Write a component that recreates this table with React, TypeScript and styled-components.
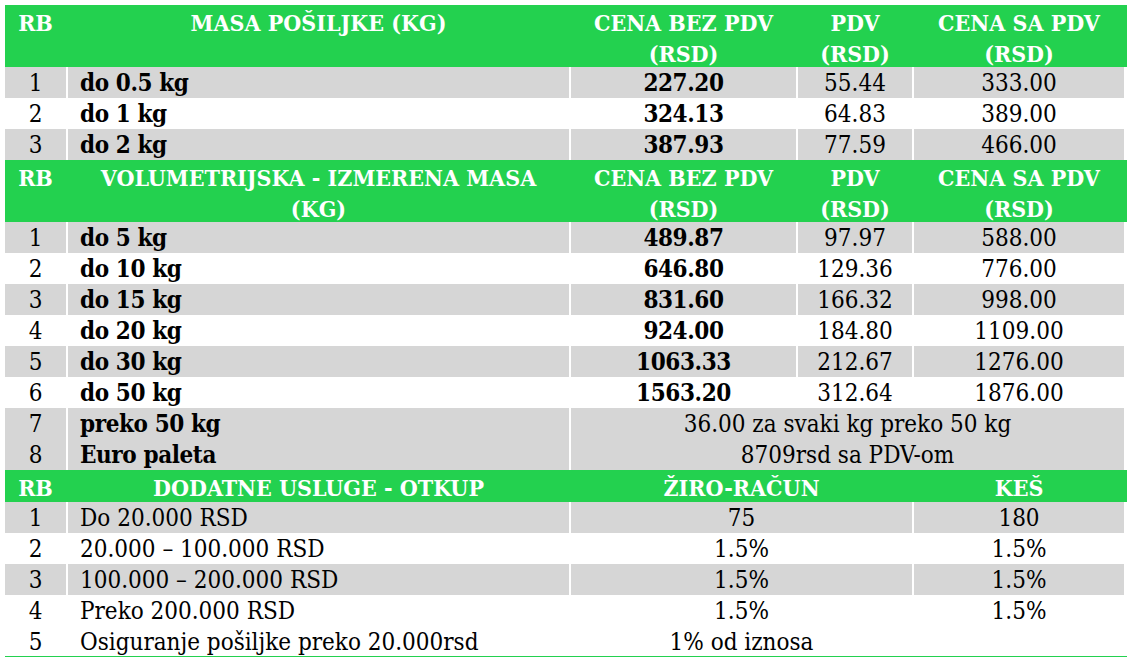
import React from "react";
import styled, { createGlobalStyle, css } from "styled-components";

const GREEN = "#23d14f";
const GRAY = "#d6d6d6";

const GlobalStyle = createGlobalStyle`
  html, body { margin: 0; padding: 0; background: #ffffff; }
  body {
    font-family: "DejaVu Serif Condensed", "DejaVu Serif", "Liberation Serif", serif;
    font-stretch: condensed;
    font-size: 24px;
    color: #000;
  }
`;

const Page = styled.div`
  padding: 5px 0 0 5px;
  width: 1122px;
`;

const Table = styled.div`
  display: flex;
  flex-direction: column;
  border-bottom: 1px solid ${GREEN};
`;

type Tone = "head" | "gray" | "white";

const Row = styled.div<{ $tone: Tone; $h: number }>`
  display: grid;
  grid-template-columns: 61px 501px 225px 114px 210px;
  column-gap: 2px;
  height: ${(p) => p.$h}px;
  padding-right: 3px;
  ${(p) =>
    p.$tone === "head"
      ? css`
          background: ${GREEN};
          color: #ffffff;
          font-weight: bold;
          font-size: 23px;
          && > * {
            padding-top: 2px;
            line-height: 31px;
          }
        `
      : css`
          background: #ffffff;
          & > * { background: ${p.$tone === "gray" ? GRAY : "transparent"}; }
        `}
`;

const Cell = styled.div<{ $left?: boolean; $bold?: boolean; $span?: number }>`
  line-height: 29px;
  padding-top: 2px;
  text-align: ${(p) => (p.$left ? "left" : "center")};
  padding-left: ${(p) => (p.$left ? "12px" : "0")};
  white-space: nowrap;
  overflow: hidden;
  ${(p) =>
    p.$bold &&
    css`
      font-weight: bold;
      letter-spacing: -0.4px;
      padding-top: 1px;
      line-height: 30px;
    `}
  ${(p) => p.$span && css`grid-column: span ${p.$span};`}
`;

type PriceRow = [string, string, string, string, string];

const sec1: PriceRow[] = [
  ["1", "do 0.5 kg", "227.20", "55.44", "333.00"],
  ["2", "do 1 kg", "324.13", "64.83", "389.00"],
  ["3", "do 2 kg", "387.93", "77.59", "466.00"],
];

const sec2: PriceRow[] = [
  ["1", "do 5 kg", "489.87", "97.97", "588.00"],
  ["2", "do 10 kg", "646.80", "129.36", "776.00"],
  ["3", "do 15 kg", "831.60", "166.32", "998.00"],
  ["4", "do 20 kg", "924.00", "184.80", "1109.00"],
  ["5", "do 30 kg", "1063.33", "212.67", "1276.00"],
  ["6", "do 50 kg", "1563.20", "312.64", "1876.00"],
];

const sec2extra: [string, string, string][] = [
  ["7", "preko 50 kg", "36.00 za svaki kg preko 50 kg"],
  ["8", "Euro paleta", "8709rsd sa PDV-om"],
];

const sec3: [string, string, string, string, Tone][] = [
  ["1", "Do 20.000 RSD", "75", "180", "gray"],
  ["2", "20.000 – 100.000 RSD", "1.5%", "1.5%", "white"],
  ["3", "100.000 – 200.000 RSD", "1.5%", "1.5%", "gray"],
  ["4", "Preko 200.000 RSD", "1.5%", "1.5%", "white"],
  ["5", "Osiguranje pošiljke preko 20.000rsd", "1% od iznosa", "", "white"],
];

const tone = (i: number): Tone => (i % 2 === 0 ? "gray" : "white");

const PriceHeader: React.FC<{ title: React.ReactNode }> = ({ title }) => (
  <Row $tone="head" $h={62}>
    <Cell>RB</Cell>
    <Cell>{title}</Cell>
    <Cell>
      CENA BEZ PDV
      <br />
      (RSD)
    </Cell>
    <Cell>
      PDV
      <br />
      (RSD)
    </Cell>
    <Cell>
      CENA SA PDV
      <br />
      (RSD)
    </Cell>
  </Row>
);

const PriceLine: React.FC<{ r: PriceRow; t: Tone }> = ({ r, t }) => (
  <Row $tone={t} $h={31}>
    <Cell>{r[0]}</Cell>
    <Cell $left $bold>
      {r[1]}
    </Cell>
    <Cell $bold>{r[2]}</Cell>
    <Cell>{r[3]}</Cell>
    <Cell>{r[4]}</Cell>
  </Row>
);

export default function App() {
  return (
    <>
      <GlobalStyle />
      <Page>
        <Table>
          <PriceHeader title="MASA POŠILJKE (KG)" />
          {sec1.map((r, i) => (
            <PriceLine key={"a" + i} r={r} t={tone(i)} />
          ))}
          <PriceHeader
            title={
              <>
                VOLUMETRIJSKA - IZMERENA MASA
                <br />
                (KG)
              </>
            }
          />
          {sec2.map((r, i) => (
            <PriceLine key={"b" + i} r={r} t={tone(i)} />
          ))}
          {sec2extra.map((r, i) => (
            <Row key={"c" + i} $tone="gray" $h={31}>
              <Cell>{r[0]}</Cell>
              <Cell $left $bold>
                {r[1]}
              </Cell>
              <Cell $span={3}>{r[2]}</Cell>
            </Row>
          ))}
          <Row $tone="head" $h={32}>
            <Cell>RB</Cell>
            <Cell>DODATNE USLUGE - OTKUP</Cell>
            <Cell $span={2}>ŽIRO-RAČUN</Cell>
            <Cell>KEŠ</Cell>
          </Row>
          {sec3.map((r, i) => (
            <Row key={"d" + i} $tone={r[4]} $h={i === 4 ? 30 : 31}>
              <Cell>{r[0]}</Cell>
              <Cell $left>{r[1]}</Cell>
              <Cell $span={2}>{r[2]}</Cell>
              <Cell>{r[3]}</Cell>
            </Row>
          ))}
        </Table>
      </Page>
    </>
  );
}
